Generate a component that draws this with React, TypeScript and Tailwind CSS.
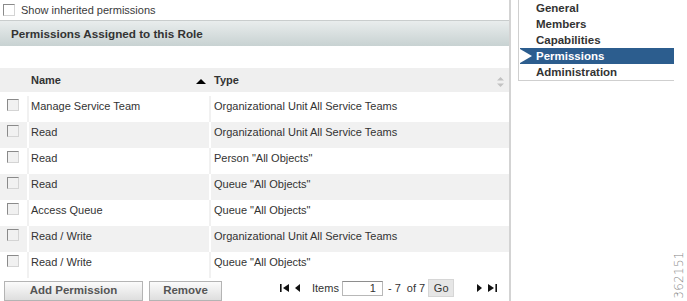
import React from "react"

const ROWS = [
  { name: "Manage Service Team", type: "Organizational Unit All Service Teams" },
  { name: "Read", type: "Organizational Unit All Service Teams" },
  { name: "Read", type: 'Person "All Objects"' },
  { name: "Read", type: 'Queue "All Objects"' },
  { name: "Access Queue", type: 'Queue "All Objects"' },
  { name: "Read / Write", type: "Organizational Unit All Service Teams" },
  { name: "Read / Write", type: 'Queue "All Objects"' },
]

const NAV = ["General", "Members", "Capabilities", "Permissions", "Administration"]

function Check({ disabled }: { disabled?: boolean }) {
  return (
    <span
      className={`block w-[12px] h-[12px] border border-t-[#8a8a8a] border-l-[#8a8a8a] border-r-[#d4d4d4] border-b-[#d4d4d4] ${
        disabled ? "bg-[#f1f1f1]" : "bg-white"
      }`}
    />
  )
}

export default function App() {
  return (
    <div className="w-[687px] h-[301px] overflow-hidden bg-white flex font-['Liberation_Sans',Arial,sans-serif] text-[#333]">
      {/* left: permissions table */}
      <div className="w-[509px] flex flex-col shrink-0">
        <div className="h-[20px] flex items-center pl-[3px] gap-[6px] text-[11px]">
          <Check />
          <span className="text-[#3a3a3a]">Show inherited permissions</span>
        </div>
        <div className="h-[26px] border-t border-[#c9cdcd] bg-gradient-to-b from-[#e9eded] to-[#c8d2d2] flex items-center pl-[11px] text-[11.7px] font-bold text-[#333]">
          Permissions Assigned to this Role
        </div>

        <div className="mt-[22px] h-[24px] bg-[#efefef] flex items-center text-[11px] font-bold">
          <div className="w-[29px]" />
          <div className="w-[180px] flex items-center pl-[2px] pr-[3px]">
            <span className="flex-1">Name</span>
            <svg width="10" height="5" viewBox="0 0 10 5" className="mt-[3px]">
              <polygon points="0,5 10,5 5,0" fill="#000" />
            </svg>
          </div>
          <div className="flex-1 flex items-center pl-[5px] pr-[5px]">
            <span className="flex-1">Type</span>
            <svg width="7" height="10" viewBox="0 0 7 10" className="mt-[3px]">
              <polygon points="0,3.5 7,3.5 3.5,0" fill="#c2c2c2" />
              <polygon points="0,6.5 7,6.5 3.5,10" fill="#c2c2c2" />
            </svg>
          </div>
        </div>

        <div className="mt-[4px] flex flex-col text-[11px]">
          {ROWS.map((r, i) => {
            const odd = i % 2 === 1
            return (
              <div key={i} className={`h-[26px] flex ${odd ? "bg-[#f1f1f1]" : "bg-white"}`}>
                <div className="w-[27px] pl-[7px] pt-[3px]">
                  <Check disabled />
                </div>
                <div className={`w-[182px] border-l-2 pl-[2px] pt-[4px] leading-[13px] ${odd ? "border-white" : "border-[#f1f1f1]"}`}>
                  {r.name}
                </div>
                <div className={`flex-1 border-l-2 pl-[3px] pt-[4px] leading-[13px] ${odd ? "border-white" : "border-[#f1f1f1]"}`}>
                  {r.type}
                </div>
              </div>
            )
          })}
        </div>

        <div className="flex items-start">
          <button className="mt-[3px] ml-[4px] w-[139px] h-[20px] border border-[#b4b4b4] bg-gradient-to-b from-[#fbfbfb] to-[#dedede] text-[11.5px] font-bold text-[#555]">
            Add Permission
          </button>
          <button className="mt-[3px] ml-[6px] w-[73px] h-[20px] border border-[#b4b4b4] bg-gradient-to-b from-[#fbfbfb] to-[#dedede] text-[11.5px] font-bold text-[#555]">
            Remove
          </button>

          <div className="ml-[58px] mt-[1px] h-[18px] flex items-center text-[11px] text-[#333]">
            <svg width="9" height="8" viewBox="0 0 9 8">
              <rect x="0" y="0" width="1.6" height="8" fill="#111" />
              <polygon points="9,0 9,8 3,4" fill="#111" />
            </svg>
            <svg width="5" height="8" viewBox="0 0 5 8" className="ml-[6px]">
              <polygon points="5,0 5,8 0,4" fill="#111" />
            </svg>
            <span className="ml-[12px]">Items</span>
            <span className="ml-[3px] w-[41px] h-[15px] border border-[#b8b8b8] border-t-[#8e8e8e] bg-white text-right pr-[6px] leading-[13px]">
              1
            </span>
            <span className="ml-[5px]">- 7&nbsp; of 7</span>
            <span className="ml-[3px] w-[26px] h-[18px] bg-[#e6e6e6] border border-[#d6d6d6] flex items-center justify-center">
              Go
            </span>
            <svg width="5" height="8" viewBox="0 0 5 8" className="ml-[23px]">
              <polygon points="0,0 0,8 5,4" fill="#111" />
            </svg>
            <svg width="9" height="8" viewBox="0 0 9 8" className="ml-[6px]">
              <polygon points="0,0 0,8 6,4" fill="#111" />
              <rect x="7.4" y="0" width="1.6" height="8" fill="#111" />
            </svg>
          </div>
        </div>
      </div>

      <div className="w-[2px] shrink-0 bg-[#d3d3d3]" />

      {/* right: role navigation */}
      <div className="flex-1 relative pl-[7px]">
        <div className="w-[156px] border-l border-b border-[#cfcfcf] text-[11.5px] font-bold">
          {NAV.map((n) => {
            const active = n === "Permissions"
            return (
              <div
                key={n}
                className={`relative ml-[1px] h-[16px] leading-[16px] pl-[16px] ${
                  active ? "bg-[#2c5d8e] text-white" : "text-[#333]"
                }`}
              >
                {active && (
                  <svg width="13" height="16" viewBox="0 0 13 16" className="absolute left-0 top-0">
                    <polygon points="0,1 0,15 12,8" fill="#fff" />
                  </svg>
                )}
                {n}
              </div>
            )
          })}
        </div>
        <span className="absolute right-[-16px] bottom-[20px] -rotate-90 text-[12px] leading-[12px] text-[#858585] font-['DejaVu_Sans',sans-serif] font-light tracking-[0.3px]">
          362151
        </span>
      </div>
    </div>
  )
}
